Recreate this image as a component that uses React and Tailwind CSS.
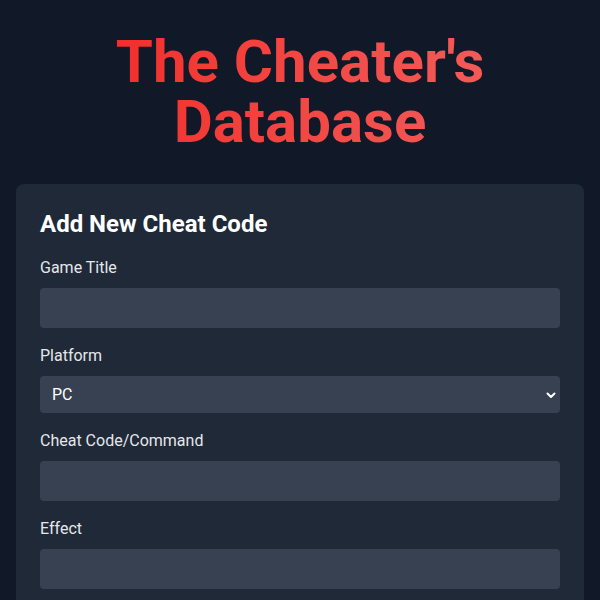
import React from "react";

function Field({ label, children }) {
  return (
    <div className="mb-4">
      <label className="block text-base leading-6 text-gray-200 mb-2">{label}</label>
      {children}
    </div>
  );
}

export default function App() {
  return (
    <div className="min-h-screen bg-[#111827] font-['Roboto',sans-serif]">
      <div className="px-4 py-8">
        <h1 className="text-6xl leading-none font-bold text-center mb-8 bg-gradient-to-r from-[#f21818] to-[#f26363] bg-clip-text text-transparent">
          The Cheater's Database
        </h1>
        <div className="bg-[#1f2937] rounded-lg p-6">
          <h2 className="text-2xl leading-8 font-bold text-white mb-4">Add New Cheat Code</h2>
          <Field label="Game Title">
            <input className="w-full h-10 rounded bg-[#374151] px-3 text-white outline-none" />
          </Field>
          <Field label="Platform">
            <div className="relative">
              <select className="w-full h-[37px] rounded bg-[#374151] pl-3 pr-8 text-white appearance-none outline-none">
                <option>PC</option>
              </select>
              <svg className="absolute right-[3px] top-1/2 -translate-y-1/2 pointer-events-none" width="12" height="12" viewBox="0 0 12 12">
                <path d="M2.5 4.5 L6 8 L9.5 4.5" fill="none" stroke="white" strokeWidth="2" strokeLinecap="round" strokeLinejoin="round" />
              </svg>
            </div>
          </Field>
          <Field label="Cheat Code/Command">
            <input className="w-full h-10 rounded bg-[#374151] px-3 text-white outline-none" />
          </Field>
          <Field label="Effect">
            <input className="w-full h-10 rounded bg-[#374151] px-3 text-white outline-none" />
          </Field>
        </div>
      </div>
    </div>
  );
}
